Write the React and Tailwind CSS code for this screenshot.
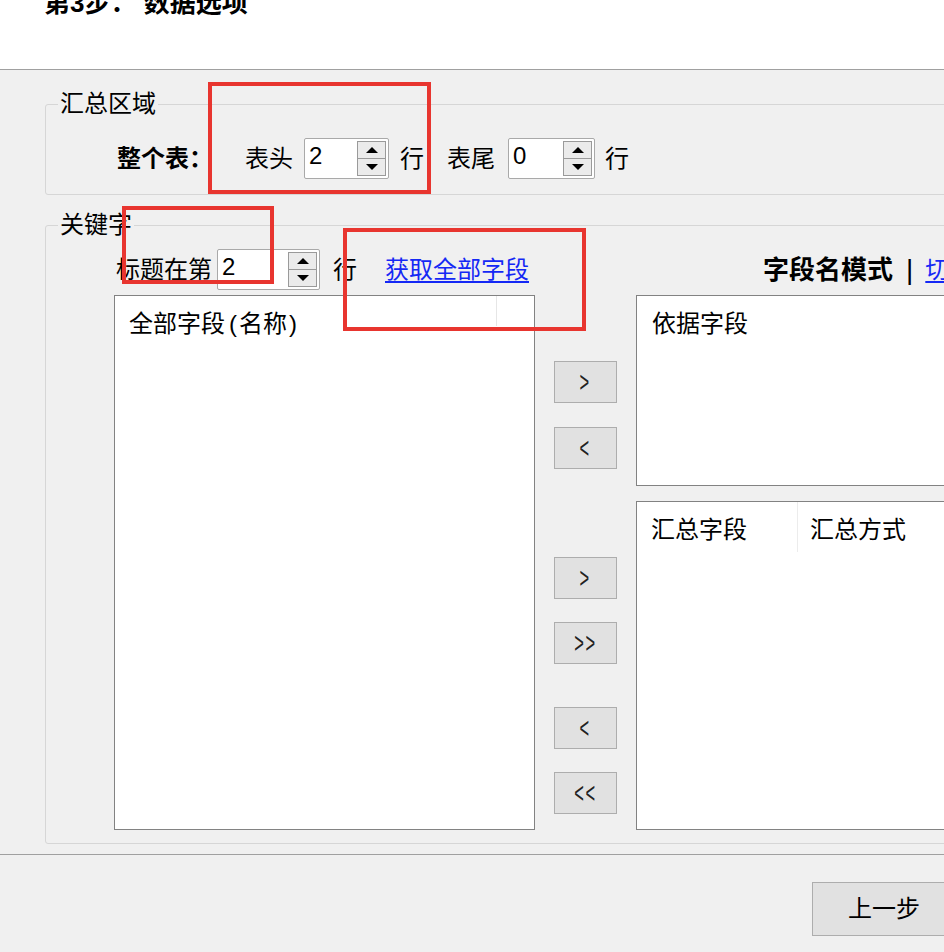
import React from "react";

// Win32-style numeric up/down box
const Spin = ({ value, width }) => (
  <div className={`flex h-[41px] ${width} shrink-0 items-stretch rounded-[2px] border border-[#a9a9a9] bg-white`}>
    <span className="flex-1 pl-[4px] pt-[3px] text-[24px] leading-[28px]">{value}</span>
    <div className="my-[2px] mr-[2px] flex w-[29px] flex-col border border-[#9a9a9a] bg-[#ebebeb]">
      <div className="flex flex-1 items-center justify-center border-b border-[#9a9a9a]">
        <div className="h-0 w-0 border-x-[6px] border-b-[6px] border-x-transparent border-b-black" />
      </div>
      <div className="flex flex-1 items-center justify-center">
        <div className="h-0 w-0 border-x-[6px] border-t-[6px] border-x-transparent border-t-black" />
      </div>
    </div>
  </div>
);

const MoveButton = ({ label, className }) => (
  <button className={`flex h-[42px] w-[63px] items-center justify-center border border-[#adadad] bg-[#e1e1e1] ${className}`}>
    <span className="inline-block scale-x-[0.55] text-[30px] font-light leading-none tracking-[3px] text-[#222]">{label}</span>
  </button>
);

const RedBox = ({ className }) => (
  <div className={`pointer-events-none absolute border-[4px] border-[#e8352f] ${className}`} />
);

export default function App() {
  return (
    <div className="relative h-[952px] w-[944px] overflow-hidden bg-[#f0f0f0] font-['Liberation_Sans','Noto_Sans_CJK_SC',sans-serif] text-black">
      {/* header */}
      <div className="flex h-[70px] items-start border-b border-[#a0a0a0] bg-white pl-[44px]">
        <h1 className="-mt-[12px] text-[26px] font-bold leading-[30px]">第3步： 数据选项</h1>
      </div>

      <div className="pl-[45px] pt-[22px]">
        {/* 汇总区域 */}
        <fieldset className="w-[930px] rounded-[3px] border border-[#d6d6d6]">
          <legend className="ml-[12px] px-[2px] text-[24px] leading-[24px]">汇总区域</legend>
          <div className="mt-[22px] flex items-center pb-[15px] pl-[71px] text-[24px] leading-[24px]">
            <span className="font-bold">整个表：</span>
            <span className="ml-[32px]">表头</span>
            <div className="ml-[11px]">
              <Spin value="2" width="w-[85px]" />
            </div>
            <span className="ml-[11px]">行</span>
            <span className="ml-[23px]">表尾</span>
            <div className="ml-[13px]">
              <Spin value="0" width="w-[87px]" />
            </div>
            <span className="ml-[10px]">行</span>
          </div>
        </fieldset>

        {/* 关键字 */}
        <fieldset className="mt-[18px] w-[930px] rounded-[3px] border border-[#d6d6d6]">
          <legend className="ml-[12px] px-[2px] text-[24px] leading-[24px]">关键字</legend>
          <div className="pb-[13px] pl-[68px]">
            <div className="mt-[12px] flex items-center text-[24px] leading-[24px]">
              <span className="ml-[2px]">标题在第</span>
              <div className="ml-[5px]">
                <Spin value="2" width="w-[103px]" />
              </div>
              <span className="ml-[13px]">行</span>
              <a className="ml-[28px] text-[#1428f5] underline underline-offset-[3px]" href="#">获取全部字段</a>
              <span className="ml-[234px] shrink-0 text-[26px] font-bold">字段名模式</span>
              <span className="ml-[13px] shrink-0 text-[28px] leading-[24px]">|</span>
              <a className="ml-[12px] shrink-0 text-[#1428f5] underline underline-offset-[3px]" href="#">切换</a>
            </div>

            <div className="mt-[5px] flex">
              {/* all fields */}
              <div className="h-[535px] w-[421px] shrink-0 border border-[#828282] bg-white">
                <div className="flex h-[30px]">
                  <div className="w-[382px] whitespace-nowrap border-r border-[#e6e6e6] pl-[14px] pt-[16px] text-[24px] leading-[24px]">
                    全部字段<span className="ml-[4px] mr-[2px]">(</span>名称<span className="ml-[2px]">)</span>
                  </div>
                </div>
              </div>

              {/* move buttons */}
              <div className="ml-[19px] flex w-[63px] shrink-0 flex-col">
                <MoveButton label=">" className="mt-[66px]" />
                <MoveButton label="<" className="mt-[24px]" />
                <MoveButton label=">" className="mt-[88px]" />
                <MoveButton label=">>" className="mt-[23px]" />
                <MoveButton label="<" className="mt-[43px]" />
                <MoveButton label="<<" className="mt-[23px]" />
              </div>

              {/* right lists */}
              <div className="ml-[19px] flex w-[340px] shrink-0 flex-col">
                <div className="h-[191px] border border-[#828282] bg-white pl-[15px] pt-[16px] text-[24px] leading-[24px]">
                  依据字段
                </div>
                <div className="mt-[15px] h-[329px] border border-[#828282] bg-white">
                  <div className="flex h-[50px] text-[24px] leading-[24px]">
                    <div className="w-[161px] border-r border-[#ececec] pl-[14px] pt-[16px]">汇总字段</div>
                    <div className="pl-[12px] pt-[16px]">汇总方式</div>
                  </div>
                </div>
              </div>
            </div>
          </div>
        </fieldset>
      </div>

      {/* footer */}
      <div className="mt-[10px] flex border-t border-[#a0a0a0] pl-[812px] pt-[27px]">
        <button className="h-[54px] w-[150px] shrink-0 border border-[#adadad] bg-[#e1e1e1] pl-[35px] text-left text-[24px] leading-[24px]">
          上一步
        </button>
      </div>

      {/* annotation boxes */}
      <RedBox className="left-[208px] top-[82px] h-[112px] w-[223px]" />
      <RedBox className="left-[122px] top-[206px] h-[78px] w-[152px]" />
      <RedBox className="left-[343px] top-[228px] h-[103px] w-[243px]" />
    </div>
  );
}
